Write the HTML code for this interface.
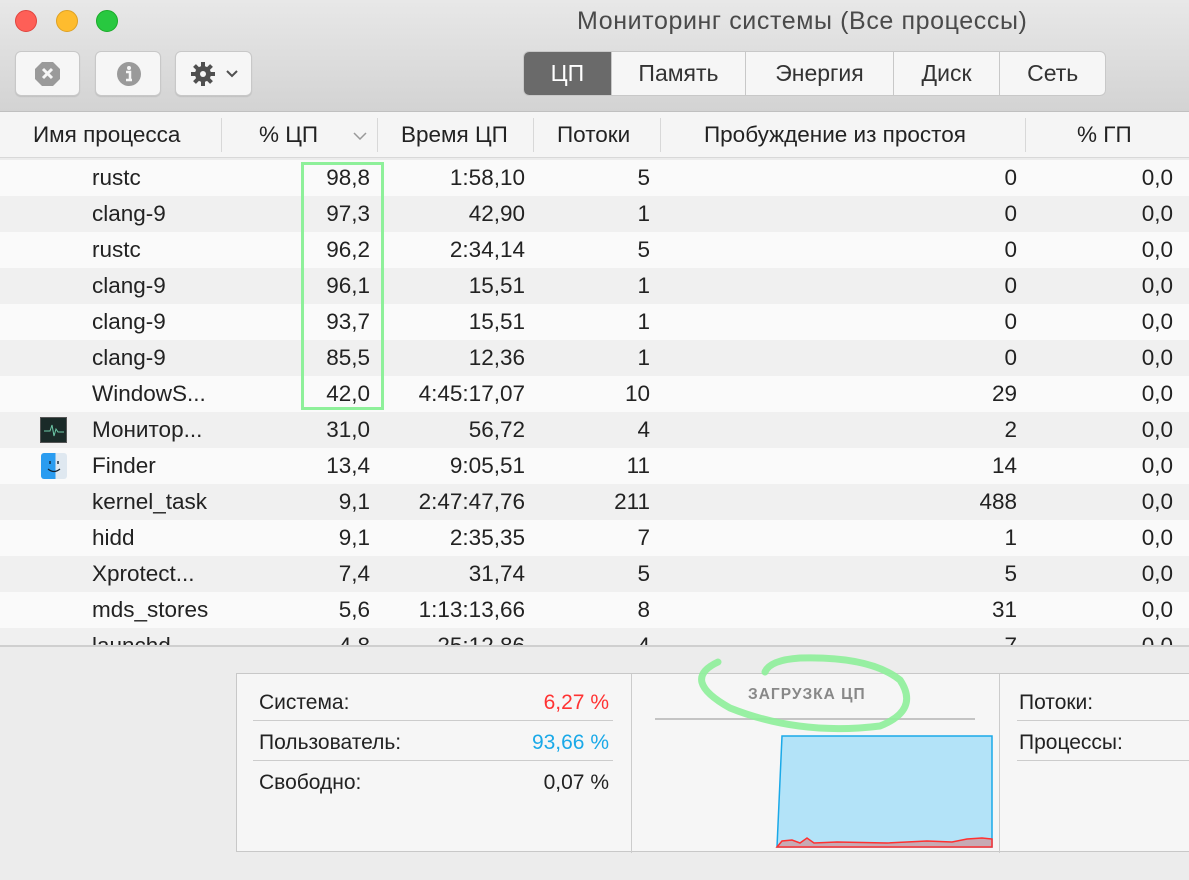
<!DOCTYPE html>
<html><head><meta charset="utf-8"><style>
*{margin:0;padding:0;box-sizing:border-box}
body{width:1189px;height:880px;overflow:hidden;font-family:"Liberation Sans","Noto Sans CJK SC",sans-serif;background:#ececec;position:relative;color:#222}
.tb{position:absolute;left:0;top:0;width:1189px;height:112px;background:linear-gradient(#e8e8e8,#d3d3d3);border-bottom:1px solid #c0c0c0}
.dot{position:absolute;top:10px;width:22px;height:22px;border-radius:50%}
.title{position:absolute;left:577px;top:7px;font-size:25px;color:#4a4a4a;letter-spacing:0.6px}
.btn{position:absolute;top:51px;height:45px;background:#f6f6f6;border:1px solid #c8c8c8;border-radius:6px;box-shadow:0 1px 1px rgba(0,0,0,.1)}
.seg{position:absolute;left:523px;top:51px;width:583px;height:45px;display:flex;border:1px solid #c8c8c8;border-radius:6px;overflow:hidden;background:#f6f6f6}
.seg div{text-align:center;line-height:43px;font-size:23px;color:#333;border-left:1px solid #c8c8c8}
.seg div:first-child{border-left:none;background:#6a6a6a;color:#fff}
.hdr{position:absolute;top:112px;left:0;width:1189px;height:46px;background:#f5f5f5;border-bottom:1px solid #d8d8d8;font-size:22.5px}
.hdr span{position:absolute;top:10px}
.sep{position:absolute;top:6px;width:1px;height:34px;background:#d8d8d8}
.row{position:absolute;left:0;width:1189px;height:36px;font-size:22.5px;color:#222}
.row span{position:absolute;top:5px}
.n{left:92px}.c{right:819px}.t{right:664px}.p{right:539px}.w{right:172px}.g{right:16px}
.panel{position:absolute;left:236px;top:673px;width:960px;height:179px;background:#f6f6f6;border:1px solid #c8c8c8}
.panel .l{position:absolute;font-size:21px}
</style></head><body>
<div class="tb"></div>
<div class="dot" style="left:15px;background:#fe5f57;border:1px solid #e0443e"></div>
<div class="dot" style="left:56px;background:#febc2e;border:1px solid #dea123"></div>
<div class="dot" style="left:96px;background:#28c840;border:1px solid #1aab29"></div>
<div class="title">Мониторинг системы (Все процессы)</div>
<div class="btn" style="left:15px;width:65px"><svg width="65" height="45" viewBox="0 0 65 45"><polygon points="26,11 37,11 44,18 44,28 37,35 26,35 19,28 19,18" fill="#9a9a9a" transform="translate(0,-1)"/><path d="M27 17l9 9M36 17l-9 9" stroke="#f6f6f6" stroke-width="3"/></svg></div>
<div class="btn" style="left:95px;width:66px"><svg width="66" height="45"><circle cx="33" cy="22" r="12" fill="#9a9a9a"/><circle cx="33" cy="16" r="2" fill="#f6f6f6"/><path d="M30 20h4v8M30 28h6" stroke="#f6f6f6" stroke-width="2.5" fill="none"/></svg></div>
<div class="btn" style="left:175px;width:77px"><svg width="77" height="45"><g transform="translate(27,22)" fill="#505050"><circle r="8"/><g stroke="#505050" stroke-width="4"><path d="M0-12V12M-12 0H12M-8.5-8.5L8.5 8.5M8.5-8.5L-8.5 8.5"/></g><circle r="3" fill="#f6f6f6"/></g><path d="M51 19l5 5 5-5" stroke="#505050" stroke-width="2" fill="none"/></svg></div>
<div class="seg"><div style="width:87px">ЦП</div><div style="width:135px">Память</div><div style="width:148px">Энергия</div><div style="width:107px">Диск</div><div style="width:106px">Сеть</div></div>
<div class="hdr">
<span style="left:33px">Имя процесса</span><div class="sep" style="left:221px"></div>
<span style="left:259px">% ЦП</span><svg style="position:absolute;left:353px;top:20px" width="14" height="8"><path d="M1 1l6 6 6-6" stroke="#999" stroke-width="1.5" fill="none"/></svg><div class="sep" style="left:377px"></div>
<span style="left:401px">Время ЦП</span><div class="sep" style="left:533px"></div>
<span style="left:557px">Потоки</span><div class="sep" style="left:660px"></div>
<span style="left:704px">Пробуждение из простоя</span><div class="sep" style="left:1025px"></div>
<span style="left:1077px">% ГП</span>
</div>
<div style="position:absolute;top:160px;left:0;width:1189px;height:485px;overflow:hidden">
<div class="row" style="top:0;background:#fafafa"><span class="n">rustc</span><span class="c">98,8</span><span class="t">1:58,10</span><span class="p">5</span><span class="w">0</span><span class="g">0,0</span></div>
<div class="row" style="top:36px;background:#f0f0f0"><span class="n">clang-9</span><span class="c">97,3</span><span class="t">42,90</span><span class="p">1</span><span class="w">0</span><span class="g">0,0</span></div>
<div class="row" style="top:72px;background:#fafafa"><span class="n">rustc</span><span class="c">96,2</span><span class="t">2:34,14</span><span class="p">5</span><span class="w">0</span><span class="g">0,0</span></div>
<div class="row" style="top:108px;background:#f0f0f0"><span class="n">clang-9</span><span class="c">96,1</span><span class="t">15,51</span><span class="p">1</span><span class="w">0</span><span class="g">0,0</span></div>
<div class="row" style="top:144px;background:#fafafa"><span class="n">clang-9</span><span class="c">93,7</span><span class="t">15,51</span><span class="p">1</span><span class="w">0</span><span class="g">0,0</span></div>
<div class="row" style="top:180px;background:#f0f0f0"><span class="n">clang-9</span><span class="c">85,5</span><span class="t">12,36</span><span class="p">1</span><span class="w">0</span><span class="g">0,0</span></div>
<div class="row" style="top:216px;background:#fafafa"><span class="n">WindowS...</span><span class="c">42,0</span><span class="t">4:45:17,07</span><span class="p">10</span><span class="w">29</span><span class="g">0,0</span></div>
<div class="row" style="top:252px;background:#f0f0f0"><div style="position:absolute;left:40px;top:5px;width:27px;height:26px;background:#1a2a28;border:1px solid #555"><svg width="25" height="24"><path d="M3 13h6l2-6 2 11 2-7 2 3h6" stroke="#6ec9a8" stroke-width="1" fill="none"/></svg></div><span class="n">Монитор...</span><span class="c">31,0</span><span class="t">56,72</span><span class="p">4</span><span class="w">2</span><span class="g">0,0</span></div>
<div class="row" style="top:288px;background:#fafafa"><div style="position:absolute;left:41px;top:5px;width:26px;height:26px;border-radius:3px;background:linear-gradient(90deg,#2a9cf0 55%,#dfe8f0 55%)"><svg width="26" height="26"><path d="M7 16q6 5 12 0" stroke="#123" stroke-width="1.2" fill="none"/><path d="M9 8v3M17 8v3" stroke="#123" stroke-width="1.4"/></svg></div><span class="n">Finder</span><span class="c">13,4</span><span class="t">9:05,51</span><span class="p">11</span><span class="w">14</span><span class="g">0,0</span></div>
<div class="row" style="top:324px;background:#f0f0f0"><span class="n">kernel_task</span><span class="c">9,1</span><span class="t">2:47:47,76</span><span class="p">211</span><span class="w">488</span><span class="g">0,0</span></div>
<div class="row" style="top:360px;background:#fafafa"><span class="n">hidd</span><span class="c">9,1</span><span class="t">2:35,35</span><span class="p">7</span><span class="w">1</span><span class="g">0,0</span></div>
<div class="row" style="top:396px;background:#f0f0f0"><span class="n">Xprotect...</span><span class="c">7,4</span><span class="t">31,74</span><span class="p">5</span><span class="w">5</span><span class="g">0,0</span></div>
<div class="row" style="top:432px;background:#fafafa"><span class="n">mds_stores</span><span class="c">5,6</span><span class="t">1:13:13,66</span><span class="p">8</span><span class="w">31</span><span class="g">0,0</span></div>
<div class="row" style="top:468px;background:#f0f0f0"><span class="n">launchd</span><span class="c">4,8</span><span class="t">25:12,86</span><span class="p">4</span><span class="w">7</span><span class="g">0,0</span></div>
</div>
<div style="position:absolute;left:0;top:645px;width:1189px;height:2px;background:#cfcfcf"></div>
<div style="position:absolute;left:301px;top:162px;width:83px;height:248px;border:3px solid #8ef09a"></div>
<div class="panel">
<div class="l" style="left:22px;top:17px">Система:</div><div class="l" style="right:586px;top:17px;color:#f33">6,27 %</div>
<div style="position:absolute;left:16px;top:46px;width:360px;height:1px;background:#ccc"></div>
<div class="l" style="left:22px;top:57px">Пользователь:</div><div class="l" style="right:586px;top:57px;color:#1aa9e8">93,66 %</div>
<div style="position:absolute;left:16px;top:86px;width:360px;height:1px;background:#ccc"></div>
<div class="l" style="left:22px;top:97px">Свободно:</div><div class="l" style="right:586px;top:97px">0,07 %</div>
<div style="position:absolute;left:394px;top:0;width:1px;height:179px;background:#ccc"></div>
<div style="position:absolute;left:511px;top:12px;font-size:15.5px;font-weight:bold;letter-spacing:1px;color:#888">ЗАГРУЗКА ЦП</div>
<div style="position:absolute;left:418px;top:44px;width:320px;height:2px;background:#c4c4c4"></div>
<svg style="position:absolute;left:530px;top:55px" width="230" height="125"><path d="M15 7H225V118H10Z" fill="#b3e3f8" stroke="#1aa9e8" stroke-width="1.5"/><path d="M10 118L15 112 25 111 33 114 40 109 47 114 70 113 120 114 160 112 185 113 200 110 215 109 225 110 225 118Z" fill="#c7aab4" stroke="#ff3030" stroke-width="1.5"/></svg>
<div style="position:absolute;left:762px;top:0;width:1px;height:179px;background:#ccc"></div>
<div class="l" style="left:782px;top:17px">Потоки:</div>
<div style="position:absolute;left:780px;top:46px;width:200px;height:1px;background:#ccc"></div>
<div class="l" style="left:782px;top:57px">Процессы:</div>
<div style="position:absolute;left:780px;top:86px;width:200px;height:1px;background:#ccc"></div>
</div>
<svg style="position:absolute;left:690px;top:650px" width="230" height="90"><path d="M28 12Q-10 30 40 58Q110 86 190 76Q230 60 210 30Q180 6 110 8Q80 10 75 22" stroke="#8ef09a" stroke-width="7" fill="none" stroke-linecap="round" opacity=".9"/></svg>
</body></html>
